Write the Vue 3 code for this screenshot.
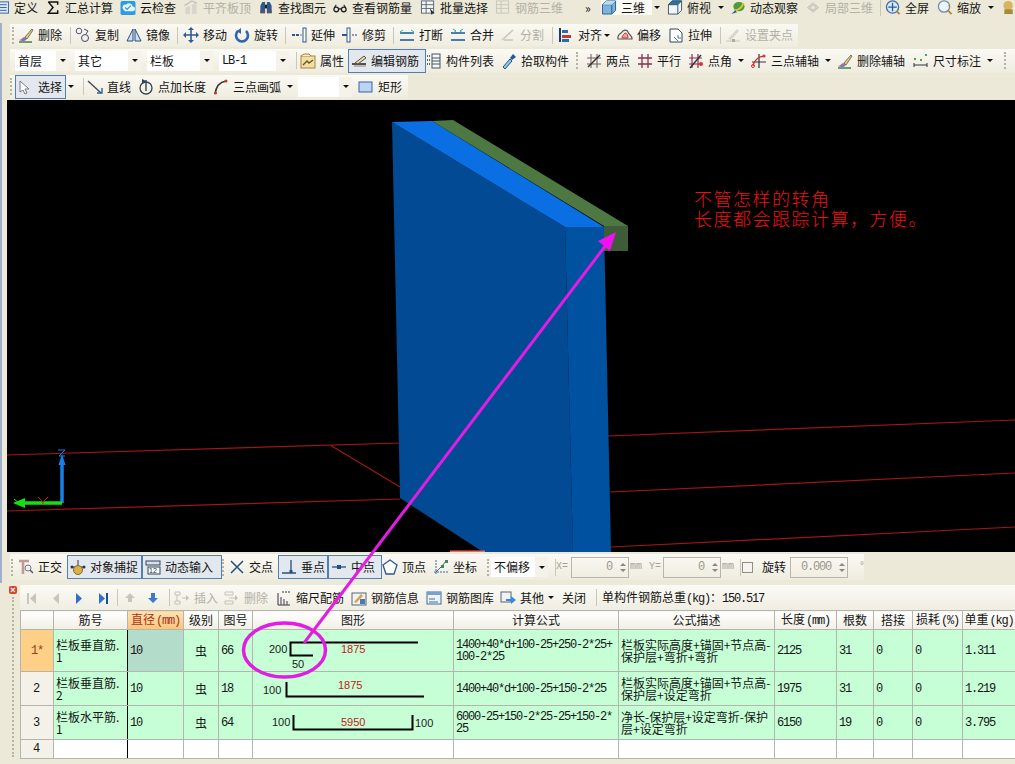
<script setup>
const icons = {
  doc: '<rect x="1" y="2" width="14" height="12" fill="#dce6f5" stroke="#35649e"/><path d="M3 5h10M3 8h10M3 11h10" stroke="#35649e"/>',
  sigma: '<path d="M3 2h10v3M13 14H3l5-6-5-6M3 14h10v-3" fill="none" stroke="#111" stroke-width="1.6"/>',
  cloud: '<rect width="16" height="15" x="0" y="1" rx="2" fill="#2d9be0"/><path d="M3 10a3 3 0 0 1 3-5 4 4 0 0 1 7 2 2 2 0 0 1 0 5H5z" fill="#eaf6ff"/><path d="M5 8l2 2 4-4" fill="none" stroke="#2d9be0" stroke-width="1.4"/>',
  level: '<path d="M2 15V8l5-2v9zM9 15V5l5-3v13z" fill="#d8d6cc"/><path d="M1 6l8-5 5 2" fill="none" stroke="#c4c2b8" stroke-width="1.5"/>',
  binoc: '<path d="M2 14V6l2-4h3v12zM9 14V2h3l2 4v8z" fill="#2c5a8c"/><rect x="7" y="5" width="2" height="4" fill="#111"/><rect x="2" y="11" width="5" height="3" fill="#556"/><rect x="9" y="11" width="5" height="3" fill="#556"/>',
  glass: '<circle cx="4" cy="10" r="2.5" fill="none" stroke="#222" stroke-width="1.4"/><circle cx="12" cy="10" r="2.5" fill="none" stroke="#222" stroke-width="1.4"/><path d="M6.5 9.500h3M2 8l2-3M14 8l-2-3" stroke="#222" stroke-width="1.200" fill="none"/>',
  batch: '<rect x="1" y="1" width="13" height="13" fill="#f6f6f0" stroke="#567"/><path d="M1 5h13M1 9h13M6 1v13" stroke="#567"/><path d="M10 9l5 5-2 0-1 2z" fill="#223"/>',
  r3d: '<rect x="1" y="1" width="13" height="13" fill="none" stroke="#c8c6bc"/><path d="M1 5h13M1 9h13M6 1v13" stroke="#c8c6bc"/>',
  cube: '<path d="M1 5l4-4h10v10l-4 4H1z" fill="#7db4dd" stroke="#235a8a"/><path d="M1 5h10v10M11 5l4-4" fill="none" stroke="#235a8a"/><path d="M5 1h10l-4 4H1z" fill="#bcdcf2"/>',
  cubetop: '<path d="M1 5l4-4h10v10l-4 4H1z" fill="#f0f6fb" stroke="#34536e"/><path d="M5 1h10l-4 4H1z" fill="#2d72a8" stroke="#34536e"/><path d="M11 5v10" stroke="#34536e"/>',
  orbit: '<ellipse cx="9" cy="7" rx="6" ry="5" fill="#4f9a3a"/><path d="M4 11c4 0 8-3 10-8" stroke="#d6c83a" stroke-width="2" fill="none"/><path d="M1 15l4-4 2 2z" fill="#2460a8"/>',
  part: '<path d="M2 8l6-5 6 5-6 5z" fill="#d6d4ca" stroke="#c4c2b8"/><circle cx="8" cy="8" r="2.500" fill="#ece9d8" stroke="#c4c2b8"/>',
  full: '<circle cx="7.500" cy="7.500" r="6.500" fill="#dbe8f8" stroke="#3f6ea8" stroke-width="1.400"/><path d="M7.500 3v9M3 7.500h9" stroke="#2a5a98" stroke-width="1.400"/><path d="M12 12l3 3" stroke="#b8862c" stroke-width="2"/>',
  zoom: '<circle cx="7" cy="7" r="6" fill="#eef4fb" stroke="#6c8cb4" stroke-width="1.400"/><path d="M11 11l4 4" stroke="#b8862c" stroke-width="2"/><path d="M11 3l2 2-2 2" fill="none" stroke="#c09a3a"/>',
  misc: '<circle cx="7" cy="6" r="5" fill="#d8b45c"/><rect x="3" y="10" width="9" height="5" fill="#a88a3c"/>',
  brush: '<path d="M7 10L14 2l1 1-6 9z" fill="#e9c86a" stroke="#776"/><path d="M7 10c-3 0-3 3-6 3 3 2 7 1 8-1z" fill="#9a6db0"/><path d="M1 15h13" stroke="#2f7d3a" stroke-width="1.400"/>',
  copy: '<circle cx="4" cy="4" r="2.800" fill="none" stroke="#557"/><circle cx="10" cy="11" r="3.500" fill="none" stroke="#446"/><path d="M9 2l4 2-2 3" fill="none" stroke="#446"/>',
  mirror: '<path d="M7 2v12H1zM9 2v12h6z" fill="#cfe0f2" stroke="#24507e"/>',
  move: '<path d="M8 1v14M1 8h14" stroke="#2f5d92" stroke-width="1.600"/><path d="M8 0l3 3H5zM8 16l3-3H5zM0 8l3-3v6zM16 8l-3-3v6z" fill="#2f5d92"/>',
  rot: '<path d="M4 4a6 6 0 1 0 8 0" fill="none" stroke="#2b63b5" stroke-width="2.600"/><path d="M7 1v6L3 4z" fill="#2b63b5"/>',
  ext: '<rect x="1" y="7" width="3" height="2" fill="#2b5a92"/><rect x="5" y="7" width="3" height="2" fill="#2b5a92"/><path d="M9 8h2" stroke="#777"/><rect x="12" y="1" width="3" height="14" fill="#fff" stroke="#2b5a92"/>',
  trim: '<rect x="5" y="1" width="3" height="14" fill="#fff" stroke="#2b5a92"/><path d="M0 8h5" stroke="#2b5a92" stroke-width="2"/><path d="M10 8h5" stroke="#999" stroke-dasharray="2 1" stroke-width="2"/>',
  brk: '<path d="M1 6h14M1 13h14" stroke="#4a7ab0" stroke-width="1.800"/><path d="M4 3l-3 2 3 2M12 3l3 2-3 2" fill="none" stroke="#3aa"/>',
  merge: '<path d="M1 6h14M1 13h14" stroke="#4a7ab0" stroke-width="1.800"/><path d="M3 2l3 2-3 2M13 2l-3 2 3 2" fill="none" stroke="#3aa"/>',
  split: '<path d="M2 13L13 3M4 13h9" stroke="#c8c6bc" stroke-width="1.600"/>',
  align: '<path d="M2 1v14" stroke="#1a3a7a" stroke-width="2"/><rect x="4" y="3" width="6" height="3" fill="#2a6ab0"/><rect x="4" y="8" width="9" height="3" fill="#c23a2a"/><rect x="4" y="12" width="7" height="3" fill="#2a6ab0"/>',
  offset: '<path d="M1 12c-1-5 3-5 4-7s5-3 6 0 4 3 4 7z" fill="#f4f0e8" stroke="#555" stroke-width="1.200"/><path d="M5 11c0-3 2-3 3-5 2 0 3 2 3 5z" fill="#f2a0a0" stroke="#c33"/>',
  stretch: '<path d="M2 2h8l4 4v9H2z" fill="#fff" stroke="#345"/><path d="M6 10l4 4M10 8v3h3" fill="none" stroke="#47a"/>',
  grip: '<path d="M3 12l9-10 2 2-8 9z" fill="#d8d6cc"/><path d="M1 14h14" stroke="#c8c6bc"/><rect x="7" y="12" width="3" height="3" fill="#aaa"/>',
  prop: '<rect x="1" y="3" width="14" height="12" fill="#f2dfa8" stroke="#a8843c"/><path d="M1 3l3-2h5l2 2" fill="#f7e9c3" stroke="#a8843c"/><path d="M3 12l4-4 2 2 4-3" stroke="#6a5a20" fill="none" stroke-width="1.400"/>',
  edit: '<path d="M1 11h14" stroke="#111" stroke-width="1.400"/><path d="M3 13h12" stroke="#888"/><path d="M4 10L13 3l2 2-8 6z" fill="#e9d9a0" stroke="#554"/>',
  list: '<path d="M1 3h3M1 7h3M1 11h3" stroke="#567" stroke-width="2" stroke-dasharray="1 1"/><rect x="6" y="1" width="8" height="14" fill="#f7f7f2" stroke="#456"/><path d="M6 5h8M6 8h8M6 11h8" stroke="#456"/>',
  pick: '<path d="M2 14l7-8 2 2-7 8z" fill="#8ccbe8" stroke="#24507e"/><path d="M9 5l3-4 3 3-4 3z" fill="#1e5aa0"/>',
  two: '<path d="M1 5h14M1 11h14M5 1v14M11 1v14" stroke="#6a5a5a" stroke-width="1"/><path d="M2 14L14 2" stroke="#333" stroke-width="1.500"/>',
  par: '<path d="M1 5h14M1 11h14M5 1v14M11 1v14" stroke="#8a3050" stroke-width="1.300"/>',
  ang: '<path d="M1 5h13M1 11h13M4 1v14M10 1v14" stroke="#8a3050" stroke-width="1.200"/><path d="M2 15L13 2" stroke="#333" stroke-width="1.400"/><circle cx="13" cy="11" r="2" fill="#d33"/>',
  arc3: '<path d="M8 1v14M1 9h14" stroke="#334" stroke-width="1.200"/><path d="M2 13C3 7 8 3 14 3" fill="none" stroke="#c33" stroke-width="1.200"/><circle cx="2" cy="13" r="1.500" fill="none" stroke="#c33"/><circle cx="13" cy="3" r="1.500" fill="#c33"/>',
  dim: '<path d="M1 10v4M14 10v4M1 12h13" stroke="#333"/><rect x="1" y="5" width="2" height="2" fill="#4a4"/><rect x="12" y="1" width="2" height="2" fill="#4a4"/><rect x="7" y="6" width="2" height="2" fill="#4a4"/>',
  cursor: '<path d="M2 2v11l3-2 2 4 2-1-2-4h4z" fill="#fff" stroke="#778"/>',
  line: '<path d="M1 2l13 12" stroke="#444a55" stroke-width="1.400"/><path d="M10 14h5V9" fill="none" stroke="#1f66b0" stroke-width="1.400"/>',
  plen: '<circle cx="8" cy="9" r="6" fill="none" stroke="#345" stroke-width="1.300"/><path d="M8 1v11" stroke="#345" stroke-width="1.400"/><path d="M4 0l4 2-4 3z" fill="#345"/>',
  arc: '<path d="M2 15C3 8 7 3 13 2" fill="none" stroke="#333" stroke-width="1.600"/><circle cx="2.500" cy="14" r="1.500" fill="#c33"/><circle cx="13" cy="2" r="1.500" fill="#c33"/>',
  rect: '<rect x="1" y="3" width="13" height="10" fill="#bcd4f4" stroke="#3a62a6"/>',
  ortho: '<path d="M1 2h10M5 2v13" stroke="#c49a94" stroke-width="2.600"/><circle cx="10" cy="9" r="3" fill="#eee" stroke="#778"/><path d="M12 11l3 3" stroke="#556" stroke-width="1.500"/>',
  snap: '<path d="M1 8h14M8 1v8" stroke="#334"/><circle cx="8" cy="11" r="4.500" fill="#d9b04c" stroke="#8a6a20"/><circle cx="2" cy="8" r="1.500" fill="#334"/><circle cx="14" cy="8" r="1.500" fill="#334"/>',
  dyn: '<rect x="1" y="2" width="14" height="4" fill="#dde" stroke="#345"/><rect x="3" y="8" width="12" height="7" fill="#fff" stroke="#345"/><text x="4" y="14" font-size="7" font-family="Liberation Sans" fill="#234">12</text>',
  cross: '<path d="M2 2l12 12M14 2L2 14" stroke="#24507e" stroke-width="1.500"/>',
  perp: '<path d="M1 14h14M10 1v13" stroke="#24507e" stroke-width="1.300"/><rect x="8.500" y="11" width="3" height="3" fill="#24507e"/>',
  midp: '<path d="M1 8h14" stroke="#24507e" stroke-width="1.300"/><rect x="6" y="6" width="4" height="4" fill="#24507e"/>',
  vert: '<path d="M8 1l7 5-3 9H4L1 6z" fill="#fff" stroke="#2a5a90" stroke-width="1.300"/>',
  coord: '<path d="M3 1v14M1 13h14" stroke="#3a6a9a" stroke-dasharray="2 1"/><path d="M3 13l6-6 4-5" stroke="#3a6a9a" fill="none"/><rect x="8" y="6" width="3" height="3" fill="#3a8a5a"/><rect x="12" y="1" width="3" height="3" fill="#3a8a5a"/>',
  first: '<rect x="0" y="3" width="2" height="11" fill="#c8c6bc"/><path d="M9 3v11L3 8.500z" fill="#c8c6bc"/>',
  prev: '<path d="M10 3v11L4 8.500z" fill="#c8c6bc"/>',
  next: '<path d="M5 3v11l6-5.500z" fill="#2f6fd0"/>',
  last: '<path d="M3 3v11l6-5.500z" fill="#2f6fd0"/><rect x="10" y="3" width="2" height="11" fill="#1a4f9e"/>',
  up: '<path d="M8 3l5 5h-3v4H6V8H3z" fill="#c8c6bc"/>',
  down: '<path d="M6 3h4v5h3l-5 5-5-5h3z" fill="#3c78d0"/>',
  ins: '<path d="M1 2h5v3H1zM1 11h5v3H1zM3 5v6M8 8h4" stroke="#c4c2b8" fill="none"/><path d="M12 5l3 3-3 3z" fill="#c4c2b8"/>',
  del: '<path d="M1 2h8v3H1zM1 11h8v3H1zM5 8h6" stroke="#c4c2b8" fill="none"/><path d="M11 5l3 3-3 3z" fill="#c4c2b8"/>',
  scale: '<path d="M2 3v12h12" stroke="#333" fill="none"/><path d="M5 15V7M8 15V9M11 15v-4" stroke="#667" stroke-width="1.300"/><path d="M6 2h8" stroke="#333" stroke-dasharray="2 1"/>',
  info: '<rect x="1" y="3" width="14" height="12" fill="#f2f2ee" stroke="#567"/><path d="M3 12l7-8 2 2-7 7z" fill="#d9a24c"/><rect x="9" y="9" width="5" height="5" fill="#4a7ab0"/>',
  lib: '<rect x="1" y="2" width="14" height="12" fill="#eef3fa" stroke="#456a94"/><rect x="1" y="2" width="14" height="3" fill="#7aa0cc"/><path d="M3 9h6M3 12h9" stroke="#456a94"/>',
  oth: '<rect x="1" y="2" width="10" height="10" fill="#eef3fa" stroke="#567"/><path d="M6 9h5V6l5 4-5 4v-3H6z" fill="#3c88d8"/>'
}

const i = (x, icon, text = '', flag = '') => ({ x, type: 'item', icon, text, flag })
const sep = (x) => ({ x, type: 'sep' })
const grip = (x) => ({ x, type: 'grip' })
const arrow = (x) => ({ x, type: 'arrow' })
const sel = (x, text) => ({ x, type: 'select', text })
const inp = (x, text) => ({ x, type: 'input', text })
const lab = (x, text, flag = '') => ({ x, type: 'label', text, flag })
const chk = (x) => ({ x, type: 'check' })

// Each item's width runs up to the next item's start, so a row is laid out by flow.
function row(left, end, list) {
  return {
    width: end - left,
    items: list.map((it, n) => {
      const next = n + 1 < list.length ? list[n + 1].x : end
      const style = { width: next - it.x + 'px' }
      if (n === 0) style.marginLeft = it.x - left + 'px'
      return { ...it, style }
    })
  }
}

const top1 = row(0, 1015, [
  i(-6, 'doc', '定义'), i(45, 'sigma', '汇总计算'), i(120, 'cloud', '云检查'), i(183, 'level', '平齐板顶', 'dim'),
  i(258, 'binoc', '查找图元'), i(332, 'glass', '查看钢筋量'), i(420, 'batch', '批量选择'), i(495, 'r3d', '钢筋三维', 'dim'),
  lab(585, '»'), i(601, 'cube', '三维', 'light'), arrow(652), i(667, 'cubetop', '俯视'), arrow(716),
  i(730, 'orbit', '动态观察'), i(805, 'part', '局部三维', 'dim'), sep(879), i(885, 'full', '全屏'), i(937, 'zoom', '缩放'),
  arrow(986), i(1001, 'misc', '')
])
const top2 = row(10, 798, [
  grip(12), i(18, 'brush', '删除'), sep(69), i(75, 'copy', '复制'), i(126, 'mirror', '镜像'), sep(176),
  i(183, 'move', '移动'), i(234, 'rot', '旋转'), sep(284), i(291, 'ext', '延伸'), i(342, 'trim', '修剪'), sep(392),
  i(399, 'brk', '打断'), i(450, 'merge', '合并'), i(500, 'split', '分割', 'dim'), sep(551), i(558, 'align', '对齐'),
  arrow(602), i(617, 'offset', '偏移'), i(668, 'stretch', '拉伸'), sep(719), i(725, 'grip', '设置夹点', 'dim')
])
const top3 = row(10, 1015, [
  sel(15, '首层'), sel(75, '其它'), sel(147, '栏板'), sel(219, 'LB-1'), sep(295), i(300, 'prop', '属性'),
  i(348, 'edit', '编辑钢筋', 'active'), i(426, 'list', '构件列表'), i(501, 'pick', '拾取构件'), grip(576),
  i(586, 'two', '两点'), i(637, 'par', '平行'), i(688, 'ang', '点角'), arrow(736), i(751, 'arc3', '三点辅轴'),
  arrow(823), i(837, 'brush', '删除辅轴'), i(913, 'dim', '尺寸标注'), arrow(985), grip(1004)
])
const top4 = row(10, 408, [
  grip(10), i(15, 'cursor', '选择', 'active'), arrow(66), sep(82), i(87, 'line', '直线'), i(138, 'plen', '点加长度'),
  i(213, 'arc', '三点画弧'), arrow(285), sel(298, ''), i(358, 'rect', '矩形')
])
const snap = row(10, 864, [
  grip(11), i(18, 'ortho', '正交'), i(67, 'snap', '对象捕捉', 'active'), i(142, 'dyn', '动态输入', 'active'), grip(222),
  i(229, 'cross', '交点'), i(278, 'perp', '垂点', 'active'), i(328, 'midp', '中点', 'active'), i(382, 'vert', '顶点'),
  i(433, 'coord', '坐标'), grip(487), sel(491, '不偏移'), sep(554), lab(556, 'X=', 'dimlat'), inp(571, '0'),
  lab(630, 'mm', 'dimlat'), lab(649, 'Y=', 'dimlat'), inp(663, '0'), lab(722, 'mm', 'dimlat'), sep(739), chk(742),
  lab(762, '旋转'), inp(790, '0.000'), lab(859, '°', 'dimlat')
])
const tbar = row(20, 1015, [
  i(27, 'first'), i(49, 'prev'), i(71, 'next'), i(96, 'last'), sep(116), i(122, 'up'), i(145, 'down'), sep(168),
  i(174, 'ins', '插入', 'dim'), i(224, 'del', '删除', 'dim'), i(276, 'scale', '缩尺配筋'), i(351, 'info', '钢筋信息'),
  i(426, 'lib', '钢筋图库'), i(500, 'oth', '其他'), arrow(546), lab(562, '关闭'), sep(595), lab(602, 'total')
])
const toolRows = [
  { cls: 'r1', data: top1 }, { cls: 'r2', data: top2 }, { cls: 'r3', data: top3 }, { cls: 'r4', data: top4 }
]

const cols = [33, 74, 56, 35, 34, 201, 165, 156, 62, 37, 39, 50, 53]
const heads = [
  { t: '' }, { t: '筋号' }, { t: '直径', u: '(mm)', hot: true }, { t: '级别' }, { t: '图号' }, { t: '图形' }, { t: '计算公式' },
  { t: '公式描述' }, { t: '长度', u: '(mm)' }, { t: '根数' }, { t: '搭接' }, { t: '损耗', u: '(%)' }, { t: '单重', u: '(kg)' }
]
const rows = [
  { id: '1*', h: 42, name: '栏板垂直筋.\n1', dia: '10', no: '66', f: '1400+40*d+100-25+250-2*25+\n100-2*25', d: '栏板实际高度+锚固+节点高-\n保护层+弯折+弯折', len: '2125', n: '31', w: '1.311', cur: true, shape: 1 },
  { id: '2', h: 34, name: '栏板垂直筋.\n2', dia: '10', no: '18', f: '1400+40*d+100-25+150-2*25', d: '栏板实际高度+锚固+节点高-\n保护层+设定弯折', len: '1975', n: '31', w: '1.219', shape: 2 },
  { id: '3', h: 34, name: '栏板水平筋.\n1', dia: '10', no: '64', f: '6000-25+150-2*25-25+150-2*\n25', d: '净长-保护层+设定弯折-保护\n层+设定弯折', len: '6150', n: '19', w: '3.795', shape: 3 }
]
</script>

<template>
  <div class="app">
    <header class="tools">
      <div v-for="r in toolRows" :key="r.cls" class="rowwrap" :class="r.cls">
        <div class="band" :style="{ width: r.data.width + 'px' }">
          <template v-for="(it, n) in r.data.items" :key="n">
            <div v-if="it.type === 'item'" class="item" :class="it.flag" :style="it.style">
              <svg class="ic" viewBox="0 0 16 16" v-html="icons[it.icon]"></svg>
              <span v-if="it.text">{{ it.text }}</span>
            </div>
            <div v-else class="cellbox" :style="it.style">
              <i v-if="it.type === 'sep'" class="sep"></i>
              <i v-else-if="it.type === 'grip'" class="grip"></i>
              <i v-else-if="it.type === 'arrow'" class="arr"></i>
              <div v-else-if="it.type === 'select'" class="sel">
                <span :class="{ lat: it.text === 'LB-1' }">{{ it.text }}</span><b><i class="arr"></i></b>
              </div>
              <span v-else class="lab">{{ it.text }}</span>
            </div>
          </template>
        </div>
      </div>
    </header>

    <section class="view">
      <svg class="scene" viewBox="7 100 1008 452" width="1008" height="452">
        <g fill="none" stroke="#a31616" stroke-width="1.200">
          <path d="M7 455L400 443M608 436L1015 420M7 511L400 499M610 492L1015 473M611 547L1015 527M330 445L400 487"/>
        </g>
        <path d="M392 122L565 227L573 552H483L400 498z" fill="#024a93"/>
        <path d="M565 227H604L611 552H573z" fill="#00519f"/>
        <path d="M392 122L432 121L604 227H565z" fill="#0a6fe2"/>
        <path d="M432 121L453 120L628 226H604z" fill="#4e7842"/>
        <rect x="604" y="226" width="24" height="25" fill="#3f5c38"/>
        <path d="M450 551.500H485" stroke="#f36a5e" stroke-width="2"/>
        <g stroke-linecap="butt">
          <path d="M62 503V462" stroke="#1a7fe8" stroke-width="3.500"/>
          <path d="M62 454l-3.500 11h7z" fill="#1a7fe8"/>
          <path d="M62 503H24" stroke="#14e014" stroke-width="3.500"/>
          <path d="M13 503l12-5v10z" fill="#14e014"/>
          <path d="M58 450h7l-6 6h6" fill="none" stroke="#1a7fe8"/>
          <path d="M38 497l5 5 5-5M43 502v2" fill="none" stroke="#c21f1f"/>
          <path d="M14 499l5 4" stroke="#14e014"/>
        </g>
      </svg>
      <div class="note">
        <p>不管怎样的转角</p>
        <p>长度都会跟踪计算&#65292;方便。</p>
      </div>
    </section>

    <section class="snaprow">
      <div class="band" :style="{ width: snap.width + 'px' }">
        <template v-for="(it, n) in snap.items" :key="n">
          <div v-if="it.type === 'item'" class="item" :class="it.flag" :style="it.style">
            <svg class="ic" viewBox="0 0 16 16" v-html="icons[it.icon]"></svg>
            <span>{{ it.text }}</span>
          </div>
          <div v-else class="cellbox" :style="it.style">
            <i v-if="it.type === 'sep'" class="sep"></i>
            <i v-else-if="it.type === 'grip'" class="grip"></i>
            <div v-else-if="it.type === 'select'" class="sel">
              <span>{{ it.text }}</span><b><i class="arr"></i></b>
            </div>
            <div v-else-if="it.type === 'input'" class="spin">
              <span class="lat">{{ it.text }}</span><em><i class="up"></i><i class="dn"></i></em>
            </div>
            <i v-else-if="it.type === 'check'" class="chk"></i>
            <span v-else class="lab" :class="it.flag">{{ it.text }}</span>
          </div>
        </template>
      </div>
    </section>

    <section class="lower">
      <aside class="rail">
        <i class="closex">×</i>
        <i class="railgrip"></i>
      </aside>
      <div class="panel">
        <div class="tbar" :style="{ width: tbar.width + 'px' }">
          <template v-for="(it, n) in tbar.items" :key="n">
            <div v-if="it.type === 'item'" class="item" :class="it.flag" :style="it.style">
              <svg class="ic" viewBox="0 0 16 16" v-html="icons[it.icon]"></svg>
              <span v-if="it.text">{{ it.text }}</span>
            </div>
            <div v-else class="cellbox" :style="it.style">
              <i v-if="it.type === 'sep'" class="sep"></i>
              <i v-else-if="it.type === 'arrow'" class="arr"></i>
              <span v-else-if="it.text === 'total'" class="lab">单构件钢筋总重<span class="lat">(kg)</span>&#65306;<span class="lat">150.517</span></span>
              <span v-else class="lab">{{ it.text }}</span>
            </div>
          </template>
        </div>
        <table class="grid">
          <colgroup><col v-for="(c, n) in cols" :key="n" :style="{ width: c + 'px' }" /></colgroup>
          <thead>
            <tr>
              <th v-for="(h, n) in heads" :key="n" :class="{ hot: h.hot }">{{ h.t }}<span v-if="h.u" class="lat">{{ h.u }}</span></th>
            </tr>
          </thead>
          <tbody>
            <tr v-for="r in rows" :key="r.id" :style="{ height: r.h + 'px' }">
              <td class="rh lat" :class="{ curh: r.cur }">{{ r.id }}</td>
              <td class="tx bk">{{ r.name }}</td>
              <td class="lat" :class="{ curc: r.cur }">{{ r.dia }}</td>
              <td class="ctr">虫</td>
              <td class="lat">{{ r.no }}</td>
              <td class="shape">
                <svg v-if="r.shape === 1" class="fig" width="200" height="41" viewBox="252 629 200 41">
                  <path d="M312 654.500H289.500V641.500H417" />
                  <text x="268" y="652">200</text><text x="291" y="667">50</text>
                  <text x="340" y="652" class="red">1875</text>
                </svg>
                <svg v-else-if="r.shape === 2" class="fig" width="200" height="33" viewBox="252 671 200 33">
                  <path d="M285.500 681V695.500H423" />
                  <text x="262" y="693">100</text>
                  <text x="337" y="688" class="red">1875</text>
                </svg>
                <svg v-else class="fig" width="200" height="33" viewBox="252 705 200 33">
                  <path d="M292.500 714V728.500H411.500V714" />
                  <text x="271" y="725">100</text><text x="414" y="726">100</text>
                  <text x="340" y="725" class="red">5950</text>
                </svg>
              </td>
              <td class="lat fm">{{ r.f }}</td>
              <td class="tx">{{ r.d }}</td>
              <td class="lat">{{ r.len }}</td>
              <td class="lat">{{ r.n }}</td>
              <td class="lat">0</td>
              <td class="lat">0</td>
              <td class="lat">{{ r.w }}</td>
            </tr>
            <tr class="empty">
              <td class="rh lat">4</td><td class="bk"></td><td></td><td></td><td></td><td></td><td></td><td></td><td></td><td></td><td></td><td></td><td></td>
            </tr>
          </tbody>
        </table>
      </div>
    </section>

    <svg class="overlay" width="1015" height="764" viewBox="0 0 1015 764">
      <ellipse cx="284.500" cy="650" rx="41" ry="27" fill="none" stroke="#e31ce3" stroke-width="3.500" />
      <path d="M304 643L606 245" stroke="#e31ce3" stroke-width="3" fill="none" />
      <path d="M616 232L610 251L598 241z" fill="#f010f0" />
    </svg>
  </div>
</template>

<style>
html, body { margin: 0; background: #ece9d8; }
</style>

<style scoped>
.app {
  position: relative;
  width: 1015px;
  height: 764px;
  overflow: hidden;
  display: flex;
  flex-direction: column;
  background: #ece9d8 linear-gradient(#9fb0c8, #9fb0c8) 0 23px / 2px 560px no-repeat;
  font: 12px/16px "Noto Sans CJK SC", "Liberation Sans", sans-serif;
  color: #151515;
}
.tools { height: 100px; flex: none; }
.rowwrap { display: flex; align-items: center; }
.r1 { height: 15px; margin-bottom: 8px; }
.r2 { height: 24px; margin-bottom: 1px; }
.r3 { height: 25px; }
.r4 { height: 27px; }
.r2 .band, .r3 .band, .r4 .band {
  margin-left: 10px;
  background: linear-gradient(#faf9f3, #efecdf);
}
.r2 .band { height: 23px; }
.r1 .band { height: 15px; line-height: 15px; }
.r1 .ic { height: 15px; }
.band { display: flex; align-items: center; flex: none; height: 24px; }
.item, .cellbox {
  flex: none;
  display: flex;
  align-items: center;
  height: 100%;
  box-sizing: border-box;
  white-space: nowrap;
}
.item { gap: 4px; }
.ic { width: 16px; height: 16px; flex: none; display: block; overflow: visible; }
.dim { color: #b3b1a6; }
.light { background: #fbfaf4; }
.active {
  height: 24px;
  padding-left: 2px;
  border: 1px solid #4f7fb3;
  background: #e3e8ee;
}
.sep { display: block; width: 1px; height: 17px; background: #c9c7ba; margin-left: 1px; }
.grip { display: block; width: 0; height: 17px; border-left: 2px dotted #b5b3a6; }
.arr {
  display: block;
  width: 0;
  height: 0;
  margin: 0 auto 0 2px;
  border: 3px solid transparent;
  border-top: 3px solid #111;
  border-bottom: 0;
}
.sel {
  display: flex;
  align-items: center;
  justify-content: space-between;
  width: calc(100% - 6px);
  height: 20px;
  background: #fff;
  padding-left: 3px;
  box-sizing: border-box;
}
.sel b {
  display: flex;
  align-items: center;
  justify-content: center;
  width: 13px;
  height: 100%;
  background: #f4f2e9;
}
.sel b .arr { margin: 0; }
.lat {
  font-family: "Liberation Mono", monospace;
  font-size: 12px;
  letter-spacing: -1.2px;
}
.lab { display: block; }
.dimlat { color: #a3a196; font-family: "Liberation Mono", monospace; font-size: 10px; }
.view {
  flex: none;
  position: relative;
  margin-left: 7px;
  height: 452px;
  background: #000;
}
.scene { display: block; }
.note {
  position: absolute;
  left: 687px;
  top: 88px;
  font-size: 18px;
  letter-spacing: 1.500px;
  font-weight: 300;
  color: #f01010;
  white-space: nowrap;
}
.note p { margin: 0; height: 20px; line-height: 20px; }
.snaprow { flex: none; height: 30px; display: flex; align-items: center; padding-left: 10px; }
.snaprow .band { height: 26px; background: linear-gradient(#faf9f3, #efecdf); }
.spin {
  display: flex;
  align-items: center;
  justify-content: flex-end;
  width: 58px;
  height: 21px;
  box-sizing: border-box;
  border: 1px solid #b8b6aa;
  color: #9a988c;
  padding-right: 2px;
  gap: 8px;
}
.spin em { display: flex; flex-direction: column; gap: 3px; }
.spin .up, .spin .dn { display: block; width: 0; height: 0; border: 3px solid transparent; }
.spin .up { border-bottom-color: #888; border-top: 0; }
.spin .dn { border-top-color: #888; border-bottom: 0; }
.chk { display: block; width: 11px; height: 11px; border: 1px solid #8f8f84; background: #f5f4ee; box-sizing: border-box; }
.lower { flex: 1; display: flex; min-height: 0; }
.rail { flex: none; width: 20px; padding: 4px 0 0 9px; box-sizing: border-box; display: flex; flex-direction: column; gap: 3px; }
.closex {
  display: block;
  width: 8px;
  height: 8px;
  font: bold 9px/8px "Liberation Sans", sans-serif;
  text-align: center;
  color: #fff;
  background: #d8432e;
  border-radius: 2px;
}
.railgrip { display: block; width: 0; height: 160px; margin-left: 3px; border-left: 2px dotted #b5b3a6; }
.panel { flex: none; width: 995px; padding-top: 3px; }
.tbar {
  height: 25px;
  display: flex;
  align-items: center;
  background: linear-gradient(#fbfaf5, #f0eee2);
}
.grid {
  table-layout: fixed;
  width: 995px;
  border-collapse: collapse;
  background: #fff;
}
.grid th, .grid td {
  border: 1px solid #b4b6ae;
  padding: 0;
  line-height: 12px;
  font-weight: 400;
  overflow: hidden;
}
.grid th {
  height: 18px;
  text-align: center;
  font-size: 12px;
  background: linear-gradient(#fff, #f1efe4);
  white-space: nowrap;
}
.grid th .lat { margin-left: 1px; }
.grid th.hot { background: linear-gradient(#fde3b4, #fbc479); color: #a8341c; }
.grid td { padding-left: 2px; background: #c6ffd6; white-space: pre; }
.grid td.rh { background: #f4f2e8; padding: 0 0 0 12px; }
.grid td.curh { background: #fdcf87; color: #9b3a1c; text-align: center; padding: 0; }
.grid td.curc { background: #b4dccb; }
.grid td.bk { border-right: 1px solid #000; }
.grid td.ctr { text-align: center; padding: 0; }
.grid td.shape { padding: 0; }
.empty { height: 19px; }
.empty td { background: #fff; }
.fig { display: block; }
.fig path { fill: none; stroke: #000; stroke-width: 2; }
.fig text { font: 11px "Liberation Sans", sans-serif; fill: #1a1a1a; }
.fig text.red { fill: #c01a1a; }
.overlay { position: absolute; left: 0; top: 0; pointer-events: none; }
</style>
